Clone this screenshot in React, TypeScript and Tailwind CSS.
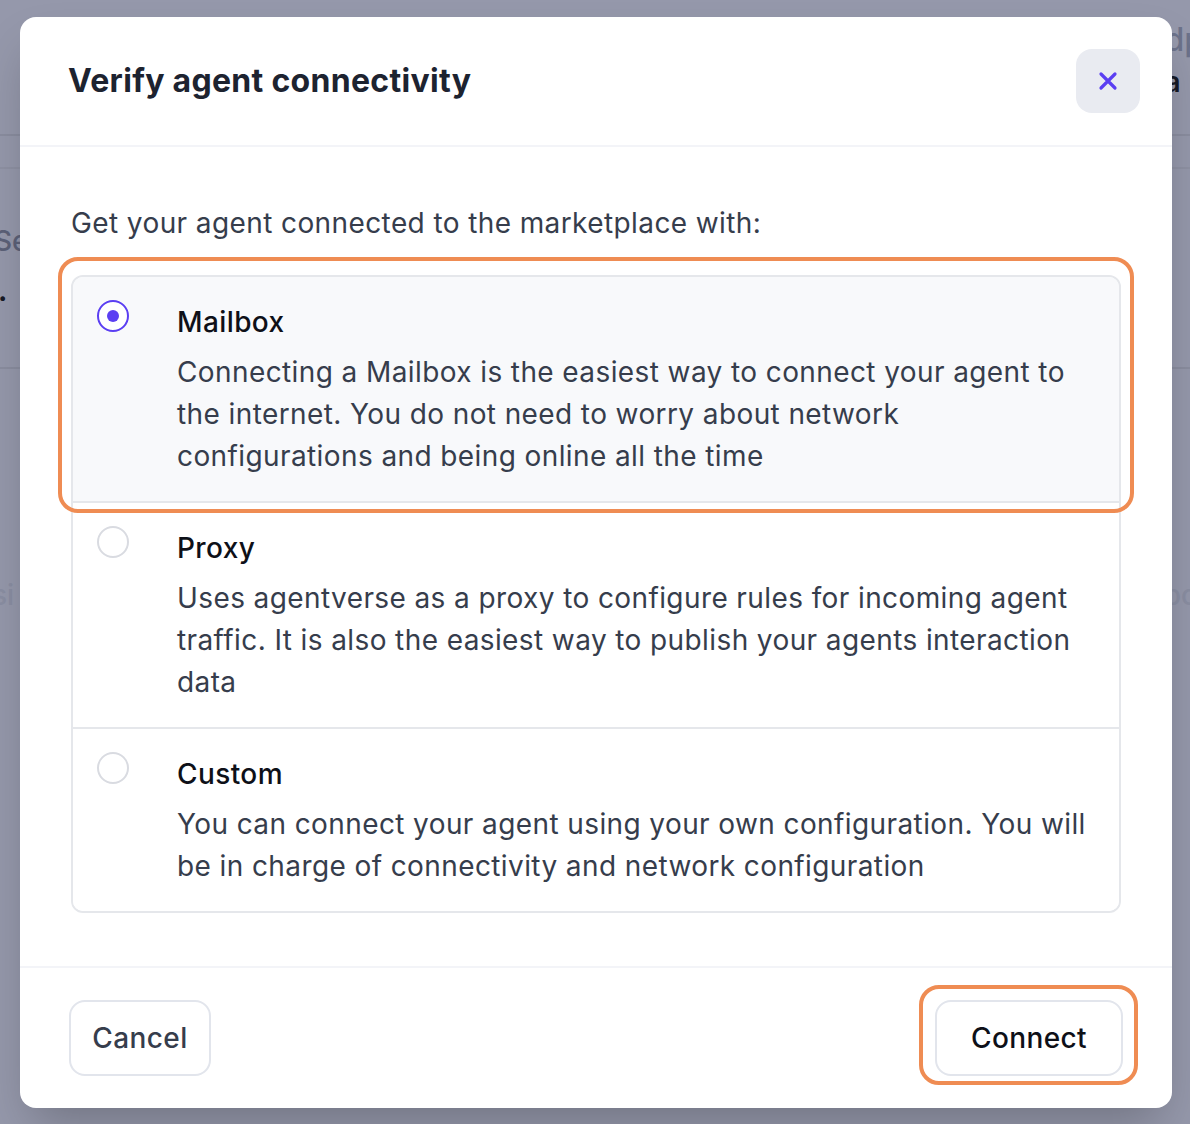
import React, { useState } from 'react';

const options = [
  {
    id: 'mailbox',
    title: 'Mailbox',
    lines: [
      'Connecting a Mailbox is the easiest way to connect your agent to',
      'the internet. You do not need to worry about network',
      'configurations and being online all the time',
    ],
  },
  {
    id: 'proxy',
    title: 'Proxy',
    lines: [
      'Uses agentverse as a proxy to configure rules for incoming agent',
      'traffic. It is also the easiest way to publish your agents interaction',
      'data',
    ],
  },
  {
    id: 'custom',
    title: 'Custom',
    lines: [
      'You can connect your agent using your own configuration. You will',
      'be in charge of connectivity and network configuration',
    ],
  },
];

function Radio({ checked }: { checked: boolean }) {
  return (
    <span
      className={`flex h-[32px] w-[32px] shrink-0 items-center justify-center rounded-full border-[2px] bg-white ${
        checked ? 'border-[#5b3ff2]' : 'border-[#d9dbe1]'
      }`}
    >
      {checked && <span className="h-[12px] w-[12px] rounded-full bg-[#5b3ff2]" />}
    </span>
  );
}

export default function App() {
  const [selected, setSelected] = useState('mailbox');

  return (
    <div
      className="relative h-[1124px] w-[1190px] overflow-hidden bg-[#9598ab]"
      style={{ fontFamily: 'Inter, "Noto Sans", sans-serif' }}
    >
      {/* dimmed page behind the dialog */}
      <div className="flex flex-col">
        <div className="flex h-[136px] justify-end border-b-[2px] border-[#8a8d9f]">
          <div className="-mr-[14px] flex flex-col pt-[24px] leading-none">
            <span className="text-[32px] font-medium text-[#6c728a]">dp</span>
            <span className="mt-[12px] text-[28px] font-semibold text-[#171a26]">a</span>
          </div>
        </div>
        <div className="h-[33px] border-b-[2px] border-[#8e91a3]" />
        <div className="flex h-[200px] flex-col border-b-[2px] border-[#8a8d9f] pt-[58px] leading-none">
          <span className="-ml-[6px] text-[28px] font-medium text-[#5c6178]">Se</span>
          <span className="-ml-[2px] mt-[22px] text-[28px] font-bold text-[#171a26]">.</span>
        </div>
        <div className="flex justify-between pt-[212px] text-[28px] font-medium leading-none text-[#8a8ea2]">
          <span className="-ml-[8px]">si</span>
          <span className="-mr-[8px]">bo</span>
        </div>
      </div>

      {/* dialog */}
      <div className="absolute left-[20px] top-[17px] w-[1152px] rounded-[16px] bg-white shadow-2xl">
        <div className="flex items-center justify-between border-b-[2px] border-[#f3f4f8] py-[32px] pl-[48px] pr-[32px]">
          <h2 className="text-[32px] font-bold tracking-[0.3px] text-[#1d2330]">Verify agent connectivity</h2>
          <button className="flex h-[64px] w-[64px] items-center justify-center rounded-[16px] bg-[#e9ebf1]">
            <svg width="20" height="20" viewBox="0 0 20 20" fill="none">
              <path d="M3 3L17 17M17 3L3 17" stroke="#5b3ff2" strokeWidth="3.2" strokeLinecap="round" />
            </svg>
          </button>
        </div>

        <div className="px-[51px] pb-[53px] pt-[55px] tracking-[0.4px]">
          <p className="text-[28px] leading-[42px] text-[#363d4c]">Get your agent connected to the marketplace with:</p>
          <div className="mt-[31px] overflow-hidden rounded-[12px] border-[2px] border-[#e5e7eb]">
            {options.map((o, i) => (
              <div
                key={o.id}
                onClick={() => setSelected(o.id)}
                className={`flex cursor-pointer gap-[48px] px-[24px] py-[24px] ${
                  i > 0 ? 'border-t-[2px] border-[#e5e7eb]' : ''
                } ${selected === o.id ? 'bg-[#f8f9fb]' : 'bg-white'}`}
              >
                <div className="-mt-[1px]">
                  <Radio checked={selected === o.id} />
                </div>
                <div>
                  <div className="text-[28px] font-medium leading-[42px] text-[#0e1018]">{o.title}</div>
                  <p className="mt-[8px] whitespace-nowrap text-[28px] leading-[42px] text-[#363d4c]">
                    {o.lines.map((l, j) => (
                      <React.Fragment key={j}>
                        {l}
                        {j < o.lines.length - 1 && <br />}
                      </React.Fragment>
                    ))}
                  </p>
                </div>
              </div>
            ))}
          </div>
        </div>

        <div className="flex items-center justify-between border-t-[2px] border-[#f3f4f8] px-[49px] py-[32px] tracking-[0.4px]">
          <button className="h-[76px] w-[142px] rounded-[16px] border-[2px] border-[#e2e5ec] bg-white text-[28px] font-medium text-[#363d4c]">
            Cancel
          </button>
          <button className="h-[76px] w-[188px] rounded-[16px] border-[2px] border-[#e2e5ec] bg-white text-[28px] font-medium text-[#0e1018]">
            Connect
          </button>
        </div>

        {/* highlight annotations */}
        <div className="pointer-events-none absolute left-[38px] top-[240px] h-[256px] w-[1076px] rounded-[20px] border-[4px] border-[#ef8c53]" />
        <div className="pointer-events-none absolute left-[899px] top-[968px] h-[100px] w-[219px] rounded-[20px] border-[4px] border-[#ef8c53]" />
      </div>
    </div>
  );
}
